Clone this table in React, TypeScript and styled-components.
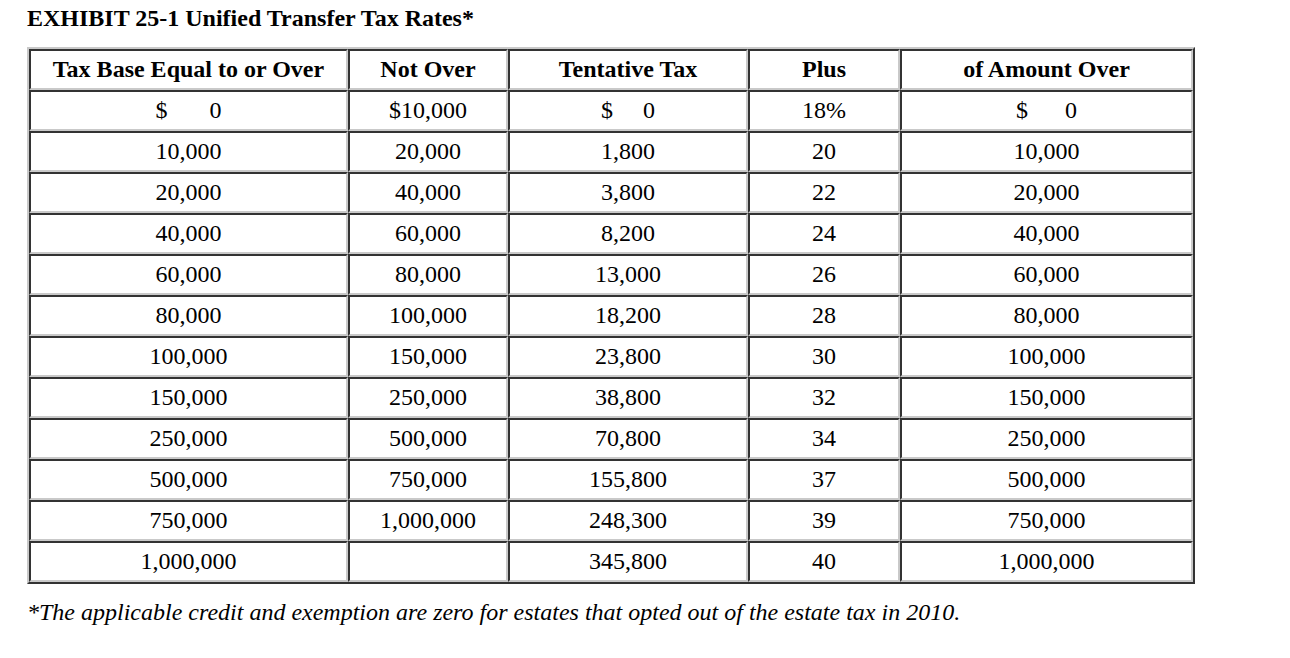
import styled, { createGlobalStyle } from "styled-components";

const GlobalStyle = createGlobalStyle`
  body {
    margin: 0;
    background: #ffffff;
    color: #000000;
    font-family: "Liberation Serif", "Times New Roman", serif;
  }
`

const Page = styled.div`
  display: flex;
  flex-direction: column;
  padding: 4px 27px 0 27px;
`

const Title = styled.h1`
  margin: 0;
  font-size: 24px;
  line-height: 28px;
  font-weight: 700;
`

const RateTable = styled.table`
  margin-top: 15px;
  width: 1168px;
  table-layout: fixed;
  border-collapse: separate;
  border-spacing: 0;
  border: 2px solid;
  border-color: #c9c9c9 #333333 #333333 #c9c9c9;
  font-size: 24px;
`

const HeadCell = styled.th`
  box-sizing: border-box;
  height: 41px;
  padding: 0;
  font-weight: 700;
  text-align: center;
  vertical-align: middle;
  border: 2px solid;
  border-color: #333333 #c9c9c9 #c9c9c9 #333333;
`

const Cell = styled.td`
  box-sizing: border-box;
  height: 41px;
  padding: 0;
  text-align: center;
  vertical-align: middle;
  border: 2px solid;
  border-color: #333333 #c9c9c9 #c9c9c9 #333333;
`

const Dollar = styled.span<{ $gap: number }>`
  display: inline-flex;
  gap: ${(p) => p.$gap}px;
`

const Note = styled.p`
  margin: 14px 0 0 0;
  font-style: italic;
  font-size: 24px;
  line-height: 28px;
`

const widths = [319, 160, 240, 152, 293];

const heads = ["Tax Base Equal to or Over", "Not Over", "Tentative Tax", "Plus", "of Amount Over"];

// gap between "$" and "0" in the first row, per column
const zeroGaps = [42, 0, 30, 37, 37];

const rows: string[][] = [
  ["$0", "$10,000", "$0", "18%", "$0"],
  ["10,000", "20,000", "1,800", "20", "10,000"],
  ["20,000", "40,000", "3,800", "22", "20,000"],
  ["40,000", "60,000", "8,200", "24", "40,000"],
  ["60,000", "80,000", "13,000", "26", "60,000"],
  ["80,000", "100,000", "18,200", "28", "80,000"],
  ["100,000", "150,000", "23,800", "30", "100,000"],
  ["150,000", "250,000", "38,800", "32", "150,000"],
  ["250,000", "500,000", "70,800", "34", "250,000"],
  ["500,000", "750,000", "155,800", "37", "500,000"],
  ["750,000", "1,000,000", "248,300", "39", "750,000"],
  ["1,000,000", "", "345,800", "40", "1,000,000"],
];

function Value({ text, gap }: { text: string; gap: number }) {
  if (text === "$0") {
    return (
      <Dollar $gap={gap}>
        <span>$</span>
        <span>0</span>
      </Dollar>
    )
  }
  return <>{text}</>
}

export default function App() {
  return (
    <>
      <GlobalStyle />
      <Page>
        <Title>EXHIBIT 25-1 Unified Transfer Tax Rates*</Title>
        <RateTable>
          <colgroup>
            {widths.map((w, i) => (
              <col key={i} style={{ width: w }} />
            ))}
          </colgroup>
          <thead>
            <tr>
              {heads.map((h) => (
                <HeadCell key={h}>{h}</HeadCell>
              ))}
            </tr>
          </thead>
          <tbody>
            {rows.map((r, i) => (
              <tr key={i}>
                {r.map((c, j) => (
                  <Cell key={j}>
                    <Value text={c} gap={zeroGaps[j]} />
                  </Cell>
                ))}
              </tr>
            ))}
          </tbody>
        </RateTable>
        <Note>*The applicable credit and exemption are zero for estates that opted out of the estate tax in 2010.</Note>
      </Page>
    </>
  )
}
